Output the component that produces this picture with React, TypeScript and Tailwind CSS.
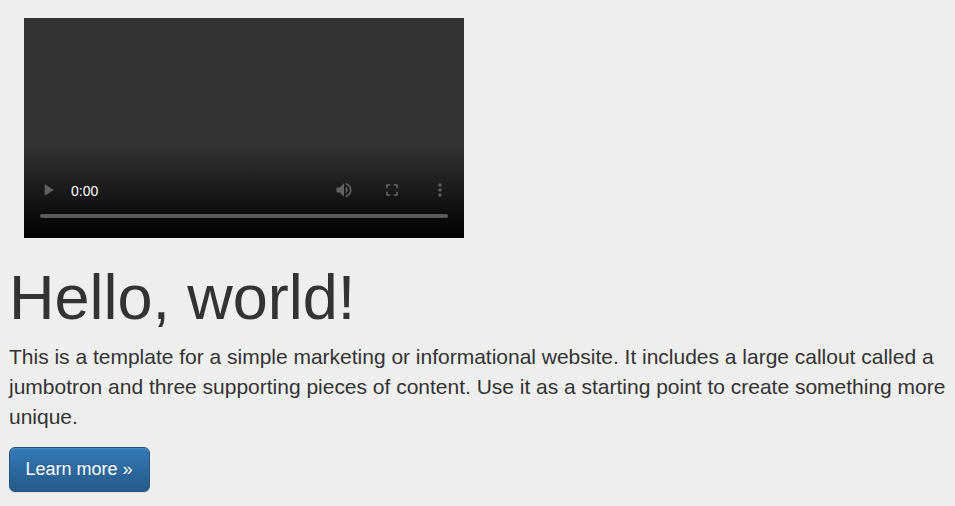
export default function App() {
  return (
    <main className="h-[506px] w-[955px] overflow-hidden bg-[#eeeeee] font-['Liberation_Sans',Arial,sans-serif] text-[#333333]">
      <section className="mt-[18px] ml-6 flex h-[220px] w-[440px] flex-col justify-end bg-[linear-gradient(to_bottom,#333333_0%,#333333_58%,#000000_100%)] px-4">
        <div className="flex h-12 items-center text-[#616161]">
          <svg className="-ml-0.5 size-5" viewBox="0 0 24 24" fill="currentColor"><path d="M8 5v14l11-7z" /></svg>
          <span className="mt-0.5 ml-[13px] text-sm text-white">0:00</span>
          <svg className="ml-auto size-5" viewBox="0 0 24 24" fill="currentColor"><path d="M3 9v6h4l5 5V4L7 9H3zm13.500 3c0-1.770-1.020-3.290-2.500-4.030v8.050c1.480-.730 2.500-2.250 2.500-4.020zM14 3.230v2.060c2.890.860 5 3.540 5 6.710s-2.110 5.850-5 6.710v2.060c4.010-.910 7-4.490 7-8.770s-2.990-7.860-7-8.770z" /></svg>
          <svg className="ml-7 size-5" viewBox="0 0 24 24" fill="currentColor"><path d="M7 14H5v5h5v-2H7v-3zm-2-4h2V7h3V5H5v5zm12 7h-3v2h5v-5h-2v3zM14 5v2h3v3h2V5h-5z" /></svg>
          <svg className="-mr-0.5 ml-7 size-5" viewBox="0 0 24 24" fill="currentColor"><path d="M12 8a2 2 0 1 0 0-4 2 2 0 0 0 0 4zm0 2a2 2 0 1 0 0 4 2 2 0 0 0 0-4zm0 6a2 2 0 1 0 0 4 2 2 0 0 0 0-4z" /></svg>
        </div>
        <div className="mb-5 h-1 rounded-full bg-[#5a5a5a]" />
      </section>
      <section className="pt-[25px] pr-1 pl-[9px]">
        <h1 className="text-[63px] leading-[69px] tracking-[-0.03px]">Hello, world!</h1>
        <p className="mt-[10px] text-[21px] leading-[30px] tracking-[-0.01px]">This is a template for a simple marketing or informational website. It includes a large callout called a jumbotron and three supporting pieces of content. Use it as a starting point to create something more unique.</p>
        <button className="mt-[15px] h-[45px] w-[141px] rounded-md border border-[#245580] bg-linear-to-b from-[#337ab7] to-[#265a88] pr-px pb-0.5 text-lg text-white shadow-[inset_0_1px_0_rgba(255,255,255,0.15),0_1px_1px_rgba(0,0,0,0.075)] [text-shadow:0_-1px_0_rgba(0,0,0,0.2)]">Learn more »</button>
      </section>
    </main>
  );
}
